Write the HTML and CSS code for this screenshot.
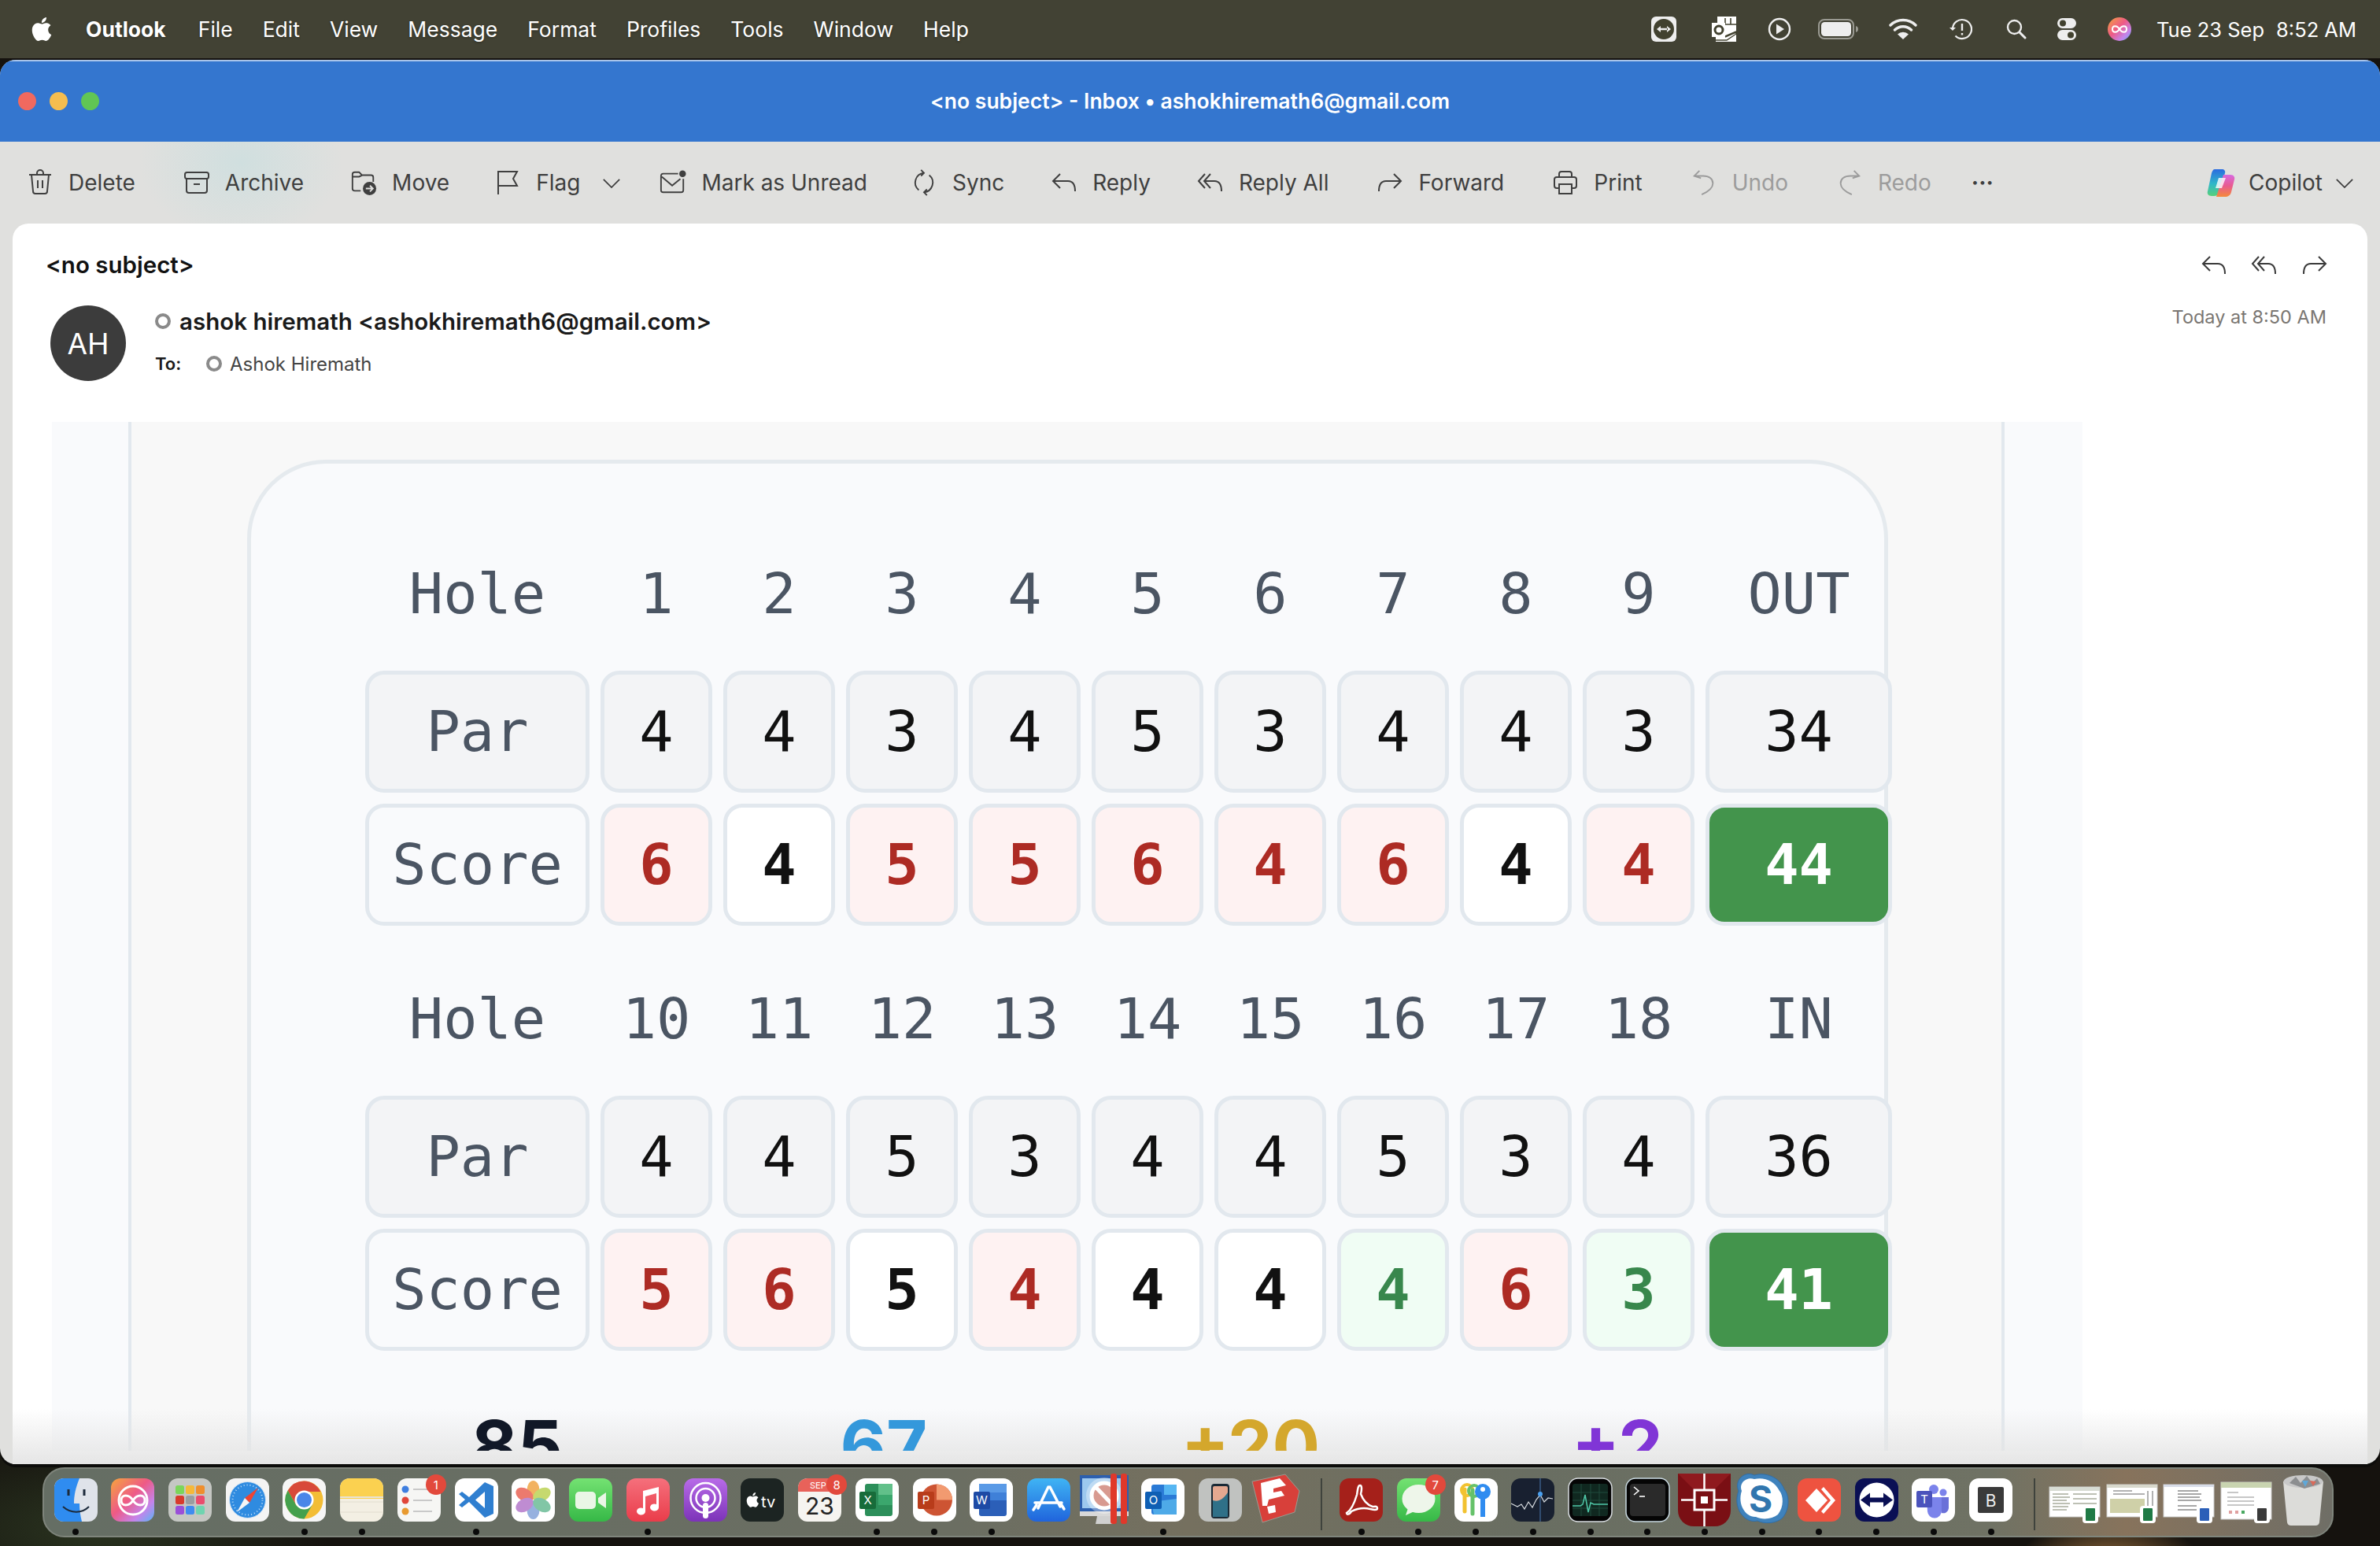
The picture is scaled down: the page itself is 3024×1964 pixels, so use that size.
FILE: index.html
```html
<!DOCTYPE html>
<html lang="en">
<head>
    <meta charset="UTF-8">
    <title>Outlook</title>
    <link rel="stylesheet" href="styles.css">
</head>
<body>
    <svg class="defs" width="0" height="0">
        <defs>
            <linearGradient id="gSiri" x1="0" y1="0" x2="1" y2="1"><stop offset="0" stop-color="#f6a53c"/><stop offset=".45" stop-color="#ee5a86"/><stop offset=".75" stop-color="#c583ea"/><stop offset="1" stop-color="#58b6f5"/></linearGradient>
            <linearGradient id="gCopilotA" x1="0" y1="0" x2="0" y2="1"><stop offset="0" stop-color="#2a6be0"/><stop offset=".55" stop-color="#30b8c8"/><stop offset="1" stop-color="#58d07a"/></linearGradient>
            <linearGradient id="gCopilotB" x1="0" y1="0" x2="0" y2="1"><stop offset="0" stop-color="#d86ae0"/><stop offset=".5" stop-color="#e85a90"/><stop offset="1" stop-color="#f58a3a"/></linearGradient>
            <linearGradient id="gGreen" x1="0" y1="0" x2="0" y2="1"><stop offset="0" stop-color="#74e272"/><stop offset="1" stop-color="#36b847"/></linearGradient>
            <linearGradient id="gMusic" x1="0" y1="0" x2="0" y2="1"><stop offset="0" stop-color="#f5707c"/><stop offset="1" stop-color="#ea3c4a"/></linearGradient>
            <linearGradient id="gPod" x1="0" y1="0" x2="0" y2="1"><stop offset="0" stop-color="#b86be8"/><stop offset="1" stop-color="#7c33b8"/></linearGradient>
            <linearGradient id="gStore" x1="0" y1="0" x2="0" y2="1"><stop offset="0" stop-color="#3fb4f4"/><stop offset="1" stop-color="#2064dc"/></linearGradient>
        </defs>
    </svg>

    <header class="menubar">
        <nav class="menu">
            <svg class="apple" viewBox="0 0 24 24"><path fill="#fff" d="M12.152 6.896c-.948 0-2.415-1.078-3.96-1.04-2.04.027-3.91 1.183-4.961 3.014-2.117 3.675-.546 9.103 1.519 12.09 1.013 1.454 2.208 3.09 3.792 3.039 1.52-.065 2.09-.987 3.935-.987 1.831 0 2.35.987 3.96.948 1.637-.026 2.676-1.48 3.676-2.948 1.156-1.688 1.636-3.325 1.662-3.415-.039-.013-3.182-1.221-3.22-4.857-.026-3.04 2.48-4.494 2.597-4.559-1.429-2.09-3.623-2.324-4.39-2.376-2-.156-3.675 1.09-4.61 1.09zM15.53 3.83c.843-1.012 1.4-2.427 1.245-3.83-1.207.052-2.662.805-3.532 1.818-.78.896-1.454 2.338-1.273 3.714 1.338.104 2.715-.688 3.559-1.701"/></svg>
            <span class="app-name">Outlook</span>
            <span>File</span><span>Edit</span><span>View</span><span>Message</span><span>Format</span><span>Profiles</span><span>Tools</span><span>Window</span><span>Help</span>
        </nav>
        <div class="status">
            <svg width="34" height="34" viewBox="0 0 34 34"><rect x="1" y="1" width="32" height="32" rx="6" fill="#eee"/><circle cx="17" cy="17" r="13" fill="#41412f"/><path d="M8 17l5-4v8zM26 17l-5-4v8zM12 15.8h10v2.4H12z" fill="#eee"/></svg>
            <svg width="34" height="34" viewBox="0 0 34 34"><path d="M8 1h24v32H6v-6H1V9h7z" fill="#fff"/><path d="M18 3v8M25 3v8M9 11h23M32 20l-14 6" stroke="#41412f" stroke-width="1.6" fill="none"/><rect x="1" y="9" width="17" height="18" fill="#fff"/><circle cx="10" cy="18" r="5" fill="none" stroke="#41412f" stroke-width="3"/><path d="M18 27l14-6v2l-12 8H6" fill="none" stroke="#41412f" stroke-width="1.4"/></svg>
            <svg width="30" height="30" viewBox="0 0 30 30"><circle cx="15" cy="15" r="13" fill="none" stroke="#eee" stroke-width="2.4"/><path d="M11 8.500l10 6.500-10 6.500z" fill="#eee"/></svg>
            <svg width="52" height="26" viewBox="0 0 52 26"><rect x="1" y="1" width="44" height="24" rx="7" fill="none" stroke="#9a9a92" stroke-width="2"/><rect x="4" y="4" width="38" height="18" rx="4.5" fill="#eee"/><path d="M48 9c2.600 1 3 2.500 3 4s-.4 3-3 4z" fill="#9a9a92"/></svg>
            <svg width="36" height="28" viewBox="0 0 36 28"><path d="M2 9a23 23 0 0 1 32 0M7.500 15a15 15 0 0 1 21 0" fill="none" stroke="#eee" stroke-width="3.400" stroke-linecap="round"/><path d="M11 20.500a10 10 0 0 1 14 0L18 27z" fill="#eee"/></svg>
            <svg width="30" height="28" viewBox="0 0 30 28"><path d="M5 14a12 12 0 1 1 3.500 8.500" fill="none" stroke="#eee" stroke-width="2.200"/><path d="M1 12l4 4 4-4z" fill="#eee"/><path d="M17 7v9M17 19v2.500" stroke="#eee" stroke-width="2.400"/></svg>
            <svg width="26" height="26" viewBox="0 0 26 26"><circle cx="10.500" cy="10.500" r="8.500" fill="none" stroke="#eee" stroke-width="2.400"/><path d="M17 17l7 7" stroke="#eee" stroke-width="3" stroke-linecap="round"/></svg>
            <svg width="26" height="30" viewBox="0 0 26 30"><rect x="1" y="1" width="24" height="13" rx="6.500" fill="#eee"/><circle cx="8" cy="7.500" r="4" fill="#41412f"/><rect x="1" y="16" width="24" height="13" rx="6.500" fill="#eee"/><circle cx="18" cy="22.500" r="4" fill="#41412f"/></svg>
            <svg width="32" height="32" viewBox="0 0 32 32"><circle cx="16" cy="16" r="15" fill="url(#gSiri)"/><path d="M16 16c-3-5-9-5-9 0s6 5 9 0 9-5 9 0-6 5-9 0z" fill="none" stroke="#fff" stroke-width="2"/></svg>
            <div class="clock"><span>Tue 23 Sep</span><span>8:52 AM</span></div>
        </div>
    </header>

    <main class="window">
        <div class="titlebar">
            <div class="lights"><i class="red"></i><i class="yellow"></i><i class="green"></i></div>
            <div class="title">&lt;no subject&gt; - Inbox • ashokhiremath6@gmail.com</div>
        </div>

        <div class="toolbar">
            <div class="tool"><svg viewBox="0 0 34 34"><path d="M3 7h28M13 7V5a4 4 0 0 1 8 0v2M6 7l2 21a3 3 0 0 0 3 3h12a3 3 0 0 0 3-3l2-21M14 14v10M20 14v10"/></svg>Delete</div>
            <div class="tool"><svg viewBox="0 0 34 34"><rect x="2" y="4" width="30" height="8" rx="2.500"/><path d="M4 12v15a3 3 0 0 0 3 3h20a3 3 0 0 0 3-3V12M13 19h8"/></svg>Archive</div>
            <div class="tool"><svg viewBox="0 0 36 36"><path d="M14 29H6a3 3 0 0 1-3-3V7a3 3 0 0 1 3-3h6l4 4h12a3 3 0 0 1 3 3v6M3 10h9l4-2"/><circle cx="26" cy="26" r="9" fill="#3f3f3f" stroke="none"/><path d="M21 26h9M26.500 22l4 4-4 4" stroke="#e0e0de"/></svg>Move</div>
            <div class="tool tool-flag"><svg viewBox="0 0 34 34"><path d="M5 32V3h24l-5 9 5 9H5"/></svg>Flag<svg class="chev" viewBox="0 0 26 16"><path d="M2 3l11 11L24 3"/></svg></div>
            <div class="tool"><svg viewBox="0 0 36 34"><path d="M25 5H5a3 3 0 0 0-3 3v19a3 3 0 0 0 3 3h24a3 3 0 0 0 3-3V12M3 9l14 12 11-9"/><circle cx="31" cy="5" r="4.500" fill="#3f3f3f" stroke="none"/></svg>Mark as Unread</div>
            <div class="tool"><svg viewBox="0 0 34 36"><path d="M10 28A13 13 0 0 1 17 5M24 8a13 13 0 0 1-7 23M13 1l4 4-4 4M21 27l-4 4 4 4"/></svg>Sync</div>
            <div class="tool"><svg viewBox="0 0 34 28"><path d="M12 3L3 12l9 9M3 12h19c6 0 9 5 9 13"/></svg>Reply</div>
            <div class="tool"><svg viewBox="0 0 34 28"><path d="M10 3l-8 9 8 9M17 3l-8 9 8 9M9 12h13c6 0 9 5 9 13"/></svg>Reply All</div>
            <div class="tool"><svg viewBox="0 0 34 28"><path d="M22 3l9 9-9 9M31 12H12c-6 0-9 5-9 13"/></svg>Forward</div>
            <div class="tool"><svg viewBox="0 0 34 34"><path d="M9 24H6a3 3 0 0 1-3-3v-8a3 3 0 0 1 3-3h22a3 3 0 0 1 3 3v8a3 3 0 0 1-3 3h-3M9 10V6a3 3 0 0 1 3-3h10a3 3 0 0 1 3 3v4M9 19h16v12H9z"/></svg>Print</div>
            <div class="tool off"><svg viewBox="0 0 34 36"><path d="M11 2L4 9l9 3M4 9h12c8 0 13 4 13 10 0 6-6 11-15 15"/></svg>Undo</div>
            <div class="tool off"><svg viewBox="0 0 34 36"><path d="M23 2l7 7-9 3M30 9H18C10 9 5 13 5 19c0 6 6 11 15 15"/></svg>Redo</div>
            <div class="tool tool-more">···</div>
            <div class="tool tool-copilot"><svg class="copilot" viewBox="0 0 38 38"><path d="M11 2h9c3 0 5 2 4 5l-8 25c-1 3-3 4-6 4H7c-4 0-6-3-5-6L7 7c1-3 2-5 4-5z" fill="url(#gCopilotA)"/><path d="M22 9h9c4 0 6 3 5 6l-4 16c-1 4-4 6-8 6H13z" fill="url(#gCopilotB)"/><path d="M16 13h9l-5 13h-8z" fill="#fff" opacity=".8"/></svg>Copilot<svg class="chev" viewBox="0 0 26 16"><path d="M2 3l11 11L24 3"/></svg></div>
        </div>

        <section class="message">
            <div class="msg-head">
                <div class="subject">&lt;no subject&gt;</div>
                <div class="msg-actions">
                    <svg viewBox="0 0 34 28"><path d="M12 3L3 12l9 9M3 12h19c6 0 9 5 9 13"/></svg>
                    <svg viewBox="0 0 34 28"><path d="M10 3l-8 9 8 9M17 3l-8 9 8 9M9 12h13c6 0 9 5 9 13"/></svg>
                    <svg viewBox="0 0 34 28"><path d="M22 3l9 9-9 9M31 12H12c-6 0-9 5-9 13"/></svg>
                </div>
            </div>
            <div class="sender-row">
                <div class="avatar">AH</div>
                <div class="sender-info">
                    <div class="sender"><i class="presence"></i>ashok hiremath &lt;ashokhiremath6@gmail.com&gt;</div>
                    <div class="recipient"><b>To:</b><i class="presence"></i>Ashok Hiremath</div>
                </div>
                <div class="date">Today at 8:50 AM</div>
            </div>

            <div class="shot">
                <div class="shot-inner">
                    <div class="card">
                        <div class="score-grid">
                            <div class="lbl">Hole</div><div class="num">1</div><div class="num">2</div><div class="num">3</div><div class="num">4</div><div class="num">5</div><div class="num">6</div><div class="num">7</div><div class="num">8</div><div class="num">9</div><div class="num">OUT</div>
                            <div class="cell par lbl">Par</div><div class="cell par">4</div><div class="cell par">4</div><div class="cell par">3</div><div class="cell par">4</div><div class="cell par">5</div><div class="cell par">3</div><div class="cell par">4</div><div class="cell par">4</div><div class="cell par">3</div><div class="cell par">34</div>
                            <div class="cell lbl score-lbl">Score</div><div class="cell over">6</div><div class="cell even">4</div><div class="cell over">5</div><div class="cell over">5</div><div class="cell over">6</div><div class="cell over">4</div><div class="cell over">6</div><div class="cell even">4</div><div class="cell over">4</div><div class="cell total">44</div>
                        </div>
                        <div class="score-grid">
                            <div class="lbl">Hole</div><div class="num">10</div><div class="num">11</div><div class="num">12</div><div class="num">13</div><div class="num">14</div><div class="num">15</div><div class="num">16</div><div class="num">17</div><div class="num">18</div><div class="num">IN</div>
                            <div class="cell par lbl">Par</div><div class="cell par">4</div><div class="cell par">4</div><div class="cell par">5</div><div class="cell par">3</div><div class="cell par">4</div><div class="cell par">4</div><div class="cell par">5</div><div class="cell par">3</div><div class="cell par">4</div><div class="cell par">36</div>
                            <div class="cell lbl score-lbl">Score</div><div class="cell over">5</div><div class="cell over">6</div><div class="cell even">5</div><div class="cell over">4</div><div class="cell even">4</div><div class="cell even">4</div><div class="cell under">4</div><div class="cell over">6</div><div class="cell under">3</div><div class="cell total">41</div>
                        </div>
                        <div class="stats">
                            <div class="stat-black">85</div>
                            <div class="stat-blue">67</div>
                            <div class="stat-gold">+20</div>
                            <div class="stat-purple">+2</div>
                        </div>
                    </div>
                </div>
            </div>
            <div class="fade"></div>
        </section>
    </main>

    <footer class="dock">
        <div class="app on"><svg viewBox="0 0 55 55"><rect width="55" height="55" rx="12" fill="#dfe3ea"/><path d="M12 0h20c-5 12-7 22-7 32h7c0 8 1 15 3 23H12A12 12 0 0 1 0 43V12A12 12 0 0 1 12 0z" fill="#2f8cf0"/><path d="M18 14v8M38 14v8" stroke="#1c2a3a" stroke-width="3"/><path d="M11 36c10 9 24 9 33 0" fill="none" stroke="#1c2a3a" stroke-width="2"/></svg></div>
        <div class="app"><svg viewBox="0 0 55 55"><rect width="55" height="55" rx="12" fill="url(#gSiri)"/><circle cx="28" cy="28" r="18" fill="none" stroke="#fff" stroke-width="3"/><path d="M28 28c-5-8-15-8-15 0s10 8 15 0 15-8 15 0-10 8-15 0z" fill="none" stroke="#fff" stroke-width="3"/></svg></div>
        <div class="app"><svg viewBox="0 0 55 55"><rect width="55" height="55" rx="12" fill="#c5c7c3"/><g><rect x="9" y="9" width="11" height="11" rx="2.500" fill="#7bd65a"/><rect x="22" y="9" width="11" height="11" rx="2.500" fill="#f5b93a"/><rect x="35" y="9" width="11" height="11" rx="2.500" fill="#ef8f2e"/><rect x="9" y="22" width="11" height="11" rx="2.500" fill="#d83a2c"/><rect x="22" y="22" width="11" height="11" rx="2.500" fill="#9a9da0"/><rect x="35" y="22" width="11" height="11" rx="2.500" fill="#ea4d6e"/><rect x="9" y="35" width="11" height="11" rx="2.500" fill="#9a4fd8"/><rect x="22" y="35" width="11" height="11" rx="2.500" fill="#3f8cf0"/><rect x="35" y="35" width="11" height="11" rx="2.500" fill="#6fd4b0"/></g></svg></div>
        <div class="app"><svg viewBox="0 0 55 55"><rect width="55" height="55" rx="12" fill="#f4f4f4"/><circle cx="27.500" cy="27.500" r="23" fill="#2f8be0" stroke="#d5e4f2" stroke-width="1"/><circle cx="27.500" cy="27.500" r="19" fill="none" stroke="#bcdcf6" stroke-width="2" stroke-dasharray="1 3"/><path d="M41 12L24 25l6 6z" fill="#ee4433"/><path d="M14 43l16-12-6-6z" fill="#f5f5f5"/></svg></div>
        <div class="app on"><svg viewBox="0 0 55 55"><rect width="55" height="55" rx="12" fill="#f6f6f6"/><circle cx="27.500" cy="27.500" r="24" fill="#f3bd35"/><path d="M27.500 3.500A24 24 0 0 0 6.700 15.500l11 19L27.500 17h20.800A24 24 0 0 0 27.500 3.500z" fill="#d84a3a"/><path d="M6.700 15.500a24 24 0 0 0 20.800 36l11-19-21 2z" fill="#44a04d"/><circle cx="27.500" cy="27.500" r="12" fill="#fff"/><circle cx="27.500" cy="27.500" r="9.500" fill="#4a86e8"/></svg></div>
        <div class="app on"><svg viewBox="0 0 55 55"><rect width="55" height="55" rx="12" fill="#f3efe3"/><path d="M0 12A12 12 0 0 1 12 0h31a12 12 0 0 1 12 12v14H0z" fill="#fbd150"/><rect y="23" width="55" height="2" fill="#e8e3d4"/><path d="M0 30h55M0 43h55" stroke="#e2ddce" stroke-width="1"/></svg></div>
        <div class="app"><svg viewBox="0 0 55 55"><rect width="55" height="55" rx="12" fill="#f6f6f4"/><circle cx="10" cy="14" r="4.500" fill="#3f7fe0"/><circle cx="10" cy="28" r="4.500" fill="#e0463a"/><circle cx="10" cy="42" r="4.500" fill="#e89a30"/><path d="M20 14h24M20 28h24M20 42h24" stroke="#bbb" stroke-width="1.500"/></svg><span class="badge">1</span></div>
        <div class="app on"><svg viewBox="0 0 55 55"><rect width="55" height="55" rx="12" fill="#fff"/><path d="M38 5l11 5v35l-11 5-20-20-9 7-4-3 8-7-8-7 4-3 9 7zM38 17L26 27.500 38 38z" fill="#2f7fd0"/></svg></div>
        <div class="app"><svg viewBox="0 0 55 55"><rect width="55" height="55" rx="12" fill="#fff"/><g opacity=".8"><ellipse cx="27.500" cy="15" rx="8" ry="12" fill="#f0a03a"/><ellipse cx="27.500" cy="40" rx="8" ry="12" fill="#7c9ed8"/><ellipse cx="16.500" cy="21" rx="8" ry="12" fill="#e85a4a" transform="rotate(-60 16.500 21)"/><ellipse cx="38.500" cy="21" rx="8" ry="12" fill="#b8d04a" transform="rotate(60 38.500 21)"/><ellipse cx="16.500" cy="34" rx="8" ry="12" fill="#b070c8" transform="rotate(60 16.500 34)"/><ellipse cx="38.500" cy="34" rx="8" ry="12" fill="#62b890" transform="rotate(-60 38.500 34)"/></g></svg></div>
        <div class="app"><svg viewBox="0 0 55 55"><rect width="55" height="55" rx="12" fill="url(#gGreen)"/><rect x="8" y="17" width="26" height="22" rx="5" fill="#eaf6e6"/><path d="M37 25l10-7v20l-10-7z" fill="#eaf6e6"/></svg></div>
        <div class="app on"><svg viewBox="0 0 55 55"><rect width="55" height="55" rx="12" fill="url(#gMusic)"/><path d="M21 16l20-5v26a5.500 4.500 0 1 1-3-4V19l-14 4v19a5.500 4.500 0 1 1-3-4z" fill="#fff"/></svg></div>
        <div class="app"><svg viewBox="0 0 55 55"><rect width="55" height="55" rx="12" fill="url(#gPod)"/><circle cx="27.500" cy="25" r="19" fill="none" stroke="#fff" stroke-width="2.500"/><circle cx="27.500" cy="25" r="12" fill="none" stroke="#fff" stroke-width="2.500"/><circle cx="27.500" cy="25" r="5" fill="#fff"/><rect x="24" y="31" width="7" height="20" rx="3.500" fill="#fff"/></svg></div>
        <div class="app"><svg viewBox="0 0 55 55"><rect width="55" height="55" rx="12" fill="#1c2422"/><path transform="translate(6 18) scale(.78)" fill="#fff" d="M12.152 6.896c-.948 0-2.415-1.078-3.96-1.04-2.04.027-3.91 1.183-4.961 3.014-2.117 3.675-.546 9.103 1.519 12.09 1.013 1.454 2.208 3.09 3.792 3.039 1.52-.065 2.09-.987 3.935-.987 1.831 0 2.35.987 3.96.948 1.637-.026 2.676-1.48 3.676-2.948 1.156-1.688 1.636-3.325 1.662-3.415-.039-.013-3.182-1.221-3.22-4.857-.026-3.04 2.48-4.494 2.597-4.559-1.429-2.09-3.623-2.324-4.39-2.376-2-.156-3.675 1.09-4.61 1.090zM15.530 3.830c.843-1.012 1.400-2.427 1.245-3.830-1.207.052-2.662.805-3.532 1.818-.78.896-1.454 2.338-1.273 3.714 1.338.104 2.715-.688 3.559-1.701"/><text x="26" y="37" class="svg-t" font-size="20" fill="#fff">tv</text></svg></div>
        <div class="app"><svg viewBox="0 0 55 55"><rect width="55" height="55" rx="12" fill="#f6f4f0"/><path d="M0 17V12A12 12 0 0 1 12 0h31a12 12 0 0 1 12 12v5z" fill="#e8625a"/><text x="15" y="13" class="svg-t" font-size="11" fill="#fff">SEP</text><text x="27.500" y="46" class="svg-t mid" font-size="30" fill="#222">23</text></svg><span class="badge badge-cal">8</span></div>
        <div class="app on"><svg viewBox="0 0 55 55"><rect width="55" height="55" rx="12" fill="#fff"/><rect x="12" y="7" width="35" height="41" rx="3" fill="#2c8f5a"/><rect x="29" y="7" width="18" height="14" fill="#62c08a"/><rect x="29" y="21" width="18" height="13" fill="#3ba76d"/><rect x="5" y="17" width="21" height="22" rx="2" fill="#176c3a"/><text x="15.500" y="33" class="svg-t mid" font-size="15" fill="#fff">X</text></svg></div>
        <div class="app on"><svg viewBox="0 0 55 55"><rect width="55" height="55" rx="12" fill="#fff"/><circle cx="30" cy="27.500" r="20" fill="#cd5433"/><path d="M30 7.500a20 20 0 0 1 20 20H30z" fill="#f29a70"/><rect x="6" y="17" width="21" height="22" rx="2" fill="#b83c1a"/><text x="16.500" y="33" class="svg-t mid" font-size="15" fill="#fff">P</text></svg></div>
        <div class="app on"><svg viewBox="0 0 55 55"><rect width="55" height="55" rx="12" fill="#fff"/><rect x="12" y="7" width="35" height="41" rx="3" fill="#2b5fb8"/><rect x="12" y="7" width="35" height="11" fill="#5a9ae6"/><rect x="12" y="18" width="35" height="10" fill="#3f80d8"/><rect x="5" y="17" width="21" height="22" rx="2" fill="#1d4aa5"/><text x="15.500" y="33" class="svg-t mid" font-size="15" fill="#fff">W</text></svg></div>
        <div class="app"><svg viewBox="0 0 55 55"><rect width="55" height="55" rx="12" fill="url(#gStore)"/><path d="M29 11l13 25M27 11L14 38M10 31h34M8 40l4-6M42 31l5 8" fill="none" stroke="#fff" stroke-width="3.500" stroke-linecap="round"/></svg></div>
        <div class="app big"><svg viewBox="-6 -6 67 67"><rect x="-6" y="-4" width="62" height="46" fill="#2c5fae"/><rect x="-3" y="0" width="56" height="38" fill="#9cc8ee"/><rect x="-6" y="42" width="62" height="6" fill="#d8d8d8"/><path d="M16 48h18l2 10H14z" fill="#d0d0d0"/><circle cx="25" cy="22" r="23" fill="#fff" opacity=".35"/><circle cx="25" cy="22" r="16" fill="#d89a90" stroke="#fff" stroke-width="5"/><path d="M14 11l22 23" stroke="#fff" stroke-width="5"/><rect x="33" y="-6" width="8" height="64" rx="3" fill="#e0382a"/><rect x="46" y="-6" width="8" height="64" rx="3" fill="#e0382a"/></svg></div>
        <div class="app on"><svg viewBox="0 0 55 55"><rect width="55" height="55" rx="12" fill="#fff"/><rect x="13" y="8" width="32" height="38" rx="3" fill="#2a7ad6"/><rect x="29" y="8" width="16" height="13" fill="#56b6f2"/><path d="M13 30l32-4v20H16z" fill="#4eaae8"/><rect x="5" y="17" width="21" height="22" rx="2" fill="#0f5fb4"/><text x="15.500" y="33" class="svg-t mid" font-size="15" fill="#fff">O</text></svg></div>
        <div class="app"><svg viewBox="0 0 55 55"><rect width="55" height="55" rx="12" fill="#c0c2c0"/><rect x="16" y="7" width="23" height="44" rx="4" fill="#1a2a36"/><rect x="18" y="10" width="19" height="39" rx="2" fill="#e4a890"/><path d="M18 49V28c7 2 12 0 19-10v31z" fill="#2f7088"/></svg></div>
        <div class="app big"><svg viewBox="-6 -6 67 67"><path d="M-5 4L37-5l18 21-6 27L8 56z" fill="#d8403a" stroke="#9a9a90" stroke-width="1"/><path d="M6 6l24-6 8 9-16 4 0 5 10-2 4 6-20 5-2 8-6 0zM14 36l10-2 1 9-9 2z" fill="#fff"/></svg></div>
        <div class="dock-sep"></div>
        <div class="app on"><svg viewBox="0 0 55 55"><rect width="55" height="55" rx="12" fill="#a5201a"/><path d="M9 44c5-3 10-13 13-23 1-5 1-12 4-12 3 0 2 7 1 11 3 8 9 14 15 16 3 0 6-1 6 2 0 3-5 2-9 1-8-2-16-1-24 3-3 5-6 4-6 2z" fill="none" stroke="#fff" stroke-width="2.500"/></svg></div>
        <div class="app on"><svg viewBox="0 0 55 55"><rect width="55" height="55" rx="12" fill="url(#gGreen)"/><ellipse cx="27.500" cy="26" rx="21" ry="18" fill="#eef6ea"/><path d="M14 38l-3 9 11-5z" fill="#eef6ea"/></svg><span class="badge">7</span></div>
        <div class="app on"><svg viewBox="0 0 55 55"><rect width="55" height="55" rx="12" fill="#fff"/><path d="M13 14v28" stroke="#f2c230" stroke-width="5" fill="none" stroke-linecap="round"/><circle cx="16" cy="15" r="7" fill="none" stroke="#f2c230" stroke-width="4"/><path d="M23 15v30" stroke="#66c26a" stroke-width="5" stroke-linecap="round"/><circle cx="25" cy="16" r="7" fill="none" stroke="#66c26a" stroke-width="4"/><circle cx="36" cy="17" r="10" fill="#2f8cf0"/><circle cx="36" cy="14" r="3" fill="#fff"/><path d="M36 25v24" stroke="#2f8cf0" stroke-width="6"/></svg></div>
        <div class="app on"><svg viewBox="0 0 55 55"><rect width="55" height="55" rx="12" fill="#182030"/><path d="M37 0v55" stroke="#4a78b0" stroke-width="1"/><path d="M0 32l8 4 5-3 4 6 5-9 5 7 5-10 5-6 5 9 5-5 6 1" fill="none" stroke="#d8dce0" stroke-width="1.200"/><circle cx="37" cy="20" r="3" fill="#4aa0f0"/></svg></div>
        <div class="app on"><svg viewBox="0 0 55 55"><rect width="55" height="55" rx="12" fill="#050505" stroke="#d8dce0" stroke-width="1.500"/><rect x="5" y="7" width="45" height="41" rx="3" fill="#102820"/><path d="M5 18h45M5 28h45M5 38h45M16 7v41M28 7v41M39 7v41" stroke="#1f4a3c" stroke-width="1"/><path d="M5 35h10l3-2 3-12 4 22 3-12 4 2h18" fill="none" stroke="#4fc8a8" stroke-width="1.500"/></svg></div>
        <div class="app on"><svg viewBox="0 0 55 55"><rect width="55" height="55" rx="12" fill="#050505" stroke="#c8d8e0" stroke-width="1.500"/><rect x="5" y="7" width="45" height="41" rx="4" fill="#2a2a2a"/><path d="M10 11l6 5-6 5" fill="none" stroke="#fff" stroke-width="1.600"/><path d="M17 23h7" stroke="#fff" stroke-width="1.600"/></svg></div>
        <div class="app big on"><svg viewBox="-6 -6 67 67"><path d="M-6-6h67v47a20 20 0 0 1-20 20H14A20 20 0 0 1-6 41z" fill="#7a0f14"/><path d="M-6-6l33 33L61-6z" fill="#8f1a1e"/><path d="M27.500-6v67M-2 27.500h59" stroke="#fff" stroke-width="2.500"/><rect x="15" y="15" width="25" height="25" fill="#7a0f14" stroke="#fff" stroke-width="3"/><rect x="23" y="23" width="9" height="9" fill="#fff"/></svg></div>
        <div class="app big on"><svg viewBox="-6 -6 67 67"><path d="M-2 16c-6-14 8-26 20-20 14-4 32 2 38 18 6 6 8 24-2 36-8 8-24 8-32 4C6 58-10 38-2 16z" fill="#3f82bc" stroke="#2f6ea8" stroke-width="1"/><path d="M2 16c-4-10 6-18 16-15 12-3 26 2 32 15 5 6 6 20-2 30-7 6-20 7-28 3C8 50-4 34 2 16z" fill="#fff"/><text x="26" y="43" class="svg-t mid" font-size="46" font-weight="700" fill="#3176ae">S</text></svg></div>
        <div class="app on"><svg viewBox="0 0 55 55"><rect width="55" height="55" rx="12" fill="#ee5340"/><path d="M24 13l14 15-14 15-14-15z" fill="#fff"/><path d="M33 11l15 17-15 17-3-3 12-14-12-14z" fill="#fff"/></svg></div>
        <div class="app on"><svg viewBox="0 0 55 55"><rect width="55" height="55" rx="12" fill="#0a0f54"/><circle cx="27.500" cy="27.500" r="22" fill="#fff"/><path d="M7 27.500l12-9v6h17v-6l12 9-12 9v-6H19v6z" fill="#0a0f54"/></svg></div>
        <div class="app on"><svg viewBox="0 0 55 55"><rect width="55" height="55" rx="12" fill="#fff"/><circle cx="28" cy="14" r="6" fill="#7b83eb"/><circle cx="40" cy="18" r="4.500" fill="#7b83eb"/><path d="M34 24h13v14a7 7 0 0 1-9 6z" fill="#6a70d8"/><path d="M19 24h19v17a9 9 0 0 1-18 1z" fill="#7b83eb"/><rect x="6" y="16" width="20" height="21" rx="2" fill="#4b53bc"/><text x="16" y="32" class="svg-t mid" font-size="15" fill="#fff">T</text></svg></div>
        <div class="app on"><svg viewBox="0 0 55 55"><rect width="55" height="55" rx="12" fill="#fff"/><rect x="11" y="11" width="33" height="33" rx="2" fill="#3a3a3a"/><text x="27.500" y="36" class="svg-t mid" font-size="21" fill="#eee">B</text></svg></div>
        <div class="dock-sep"></div>
        <div class="app thumb"><svg viewBox="-4 0 64 50"><rect x="-4" y="3" width="64" height="38" fill="#fff" stroke="#ccc"/><rect x="-4" y="3" width="64" height="5" fill="#d8dcd4"/><path d="M0 12h20M0 16h22M0 20h18M0 24h22M0 28h20M0 32h18M26 12h30M26 18h30M26 24h30" stroke="#a8ac9c" stroke-width="1.500"/><rect x="38" y="27" width="20" height="22" rx="4" fill="#fff"/><rect x="42" y="30" width="12" height="16" rx="1" fill="#1f7a45"/></svg></div>
        <div class="app thumb"><svg viewBox="-4 0 64 50"><rect x="-4" y="0" width="64" height="41" fill="#fff" stroke="#ccc"/><rect x="-4" y="0" width="64" height="4" fill="#d8d8cc"/><rect x="0" y="18" width="44" height="18" fill="#cfd0a8"/><path d="M4 8h24M4 12h40M48 8v28M54 8v28" stroke="#999" stroke-width="1.500"/><rect x="38" y="27" width="20" height="22" rx="4" fill="#fff"/><rect x="42" y="30" width="12" height="16" rx="1" fill="#1f7a45"/></svg></div>
        <div class="app thumb"><svg viewBox="-4 0 64 50"><rect x="-4" y="0" width="64" height="41" fill="#fff" stroke="#ccc"/><path d="M14 8h26M14 12h30M14 16h28M14 20h30M14 27h24M14 32h28" stroke="#8a8a8a" stroke-width="1.500"/><rect x="-4" y="0" width="64" height="3" fill="#d8dce8"/><rect x="38" y="27" width="20" height="22" rx="4" fill="#fff"/><rect x="42" y="30" width="12" height="16" rx="1" fill="#2b5fb8"/></svg></div>
        <div class="app thumb"><svg viewBox="-4 0 64 50"><rect x="-4" y="-3" width="64" height="47" fill="#fff" stroke="#ccc"/><rect x="-4" y="-3" width="64" height="7" fill="#c9d4b0"/><path d="M4 10h14M4 16h34M4 21h34M4 26h34" stroke="#b5b5b5" stroke-width="1.500"/><rect x="6" y="33" width="4" height="4" fill="#e0a0a0"/><rect x="14" y="33" width="4" height="4" fill="#e0a0a0"/><rect x="22" y="33" width="4" height="4" fill="#48a860"/><rect x="38" y="27" width="20" height="22" rx="4" fill="#fff"/><rect x="42" y="30" width="12" height="16" rx="1" fill="#3a3a3a"/></svg></div>
        <div class="app big"><svg viewBox="-6 -6 67 67"><path d="M2 4h51l-5 52a5 5 0 0 1-5 4H12a5 5 0 0 1-5-4z" fill="#e8e8e6" opacity=".9"/><ellipse cx="27.500" cy="4" rx="25" ry="8" fill="#c8c8c8"/><path d="M10 6l8-8 6 8 8-9 7 9 6-6 4 7-20 6z" fill="#8c8e90"/><path d="M26 3l4 8 4-8z" fill="#5fa8d8"/><path d="M36 3l4 7 4-6z" fill="#d86a5a"/></svg></div>
    </footer>
</body>
</html>
```

FILE: styles.css
```css
* {
    box-sizing: border-box;
}
html, body {
    margin: 0;
    padding: 0;
}
body {
    width: 3024px;
    height: 1964px;
    overflow: hidden;
    font-family: Inter, "Liberation Sans", sans-serif;
    background:
        radial-gradient(ellipse 120px 60px at 2680px 1990px, #9a7040, transparent),
        radial-gradient(ellipse 300px 120px at 120px 1940px, #2a3420, transparent),
        #15120e;
}
.defs {
    position: absolute;
}

/* menu bar */
.menubar {
    height: 74px;
    background: #424234;
    display: flex;
    align-items: center;
    justify-content: space-between;
    color: #fff;
    font-size: 26.500px;
    padding: 0 30px 0 38px;
}
.menu {
    display: flex;
    align-items: center;
    gap: 38px;
    text-shadow: 0 1px 3px rgba(0, 0, 0, .35);
}
.apple {
    width: 30px;
    height: 34px;
    margin-right: 3px;
}
.app-name {
    font-weight: 700;
    margin-right: 3px;
}
.status {
    display: flex;
    align-items: center;
    gap: 38px;
    font-size: 25.500px;
}
.status svg:nth-child(1) { margin-right: 5px; }
.status svg:nth-child(3) { margin-right: -4px; }
.status svg:nth-child(5) { margin-right: 2px; }
.status svg:nth-child(6) { margin-right: 5px; }
.clock {
    display: flex;
    gap: 15px;
    margin-left: -7px;
}

/* window */
.window {
    margin-top: 2px;
    height: 1784px;
    display: flex;
    flex-direction: column;
    border-radius: 20px 20px 20px 20px;
    overflow: hidden;
    background: #e0e0de;
    box-shadow: 0 4px 0 #0c0c0a;
}
.titlebar {
    height: 104px;
    background: #3476cf;
    border-top: 2px solid #a9c4ea;
    display: flex;
    align-items: center;
    justify-content: center;
    position: relative;
}
.lights {
    position: absolute;
    left: 23px;
    top: 39px;
    display: flex;
    gap: 17px;
}
.lights i {
    width: 23px;
    height: 23px;
    border-radius: 50%;
}
.lights .red { background: #f0695f; }
.lights .yellow { background: #f5bd4f; }
.lights .green { background: #61c554; }
.title {
    color: #fff;
    font-size: 26.500px;
    font-weight: 600;
    padding-bottom: 2px;
}

/* toolbar */
.toolbar {
    height: 104px;
    display: flex;
    align-items: center;
    gap: 58px;
    padding: 0 33px 0 34px;
    flex-shrink: 0;
    background: radial-gradient(ellipse 130px 100px at 306px 26px, #d0dfdf, transparent) #e0e0de;
}
.tool {
    display: flex;
    align-items: center;
    gap: 19px;
    font-size: 28px;
    color: #3f3f3f;
}
.tool:nth-child(2) { margin-left: 3px; }
.tool:nth-child(3) { margin-left: 1px; }
.tool:nth-child(4) { margin-left: -1px; }
.tool:nth-child(5) { margin-left: -9px; }
.tool:nth-child(6) { margin-left: -3px; }
.tool:nth-child(7) { margin-left: 1px; }
.tool:nth-child(8) { margin-left: 1px; }
.tool:nth-child(9) { margin-left: 3px; }
.tool:nth-child(10) { margin-left: 3px; }
.tool:nth-child(11) { margin-left: 3px; }
.tool:nth-child(12) { margin-left: 3px; }
.tool svg {
    width: 34px;
    height: 34px;
    fill: none;
    stroke: #3f3f3f;
    stroke-width: 2;
    flex-shrink: 0;
}
.tool.off {
    color: #9c9c9c;
}
.tool.off svg {
    stroke: #9c9c9c;
}
.tool .chev {
    width: 24px;
    height: 15px;
    margin-left: 9px;
}
.tool-more {
    font-weight: 700;
    margin-left: -7px;
}
.tool-copilot {
    margin-left: auto;
    gap: 16px;
}
.tool-copilot .chev {
    margin-left: 0;
}
.tool .copilot {
    width: 38px;
    height: 38px;
    stroke: none;
}

/* message */
.message {
    flex: 1;
    min-height: 0;
    margin: 0 16px;
    background: #fff;
    border-radius: 20px 20px 0 0;
    position: relative;
    display: flex;
    flex-direction: column;
    padding-bottom: 17px;
}
.msg-head {
    display: flex;
    justify-content: space-between;
    align-items: center;
    height: 72px;
    padding: 34px 50px 0 42px;
}
.subject {
    font-size: 29.500px;
    font-weight: 600;
    color: #111;
    margin-top: -2px;
}
.msg-actions {
    display: flex;
    gap: 30px;
}
.msg-actions svg {
    width: 34px;
    height: 28px;
    fill: none;
    stroke: #3a3a3a;
    stroke-width: 2;
}
.sender-row {
    display: flex;
    height: 180px;
    padding: 32px 52px 0 48px;
}
.avatar {
    width: 96px;
    height: 96px;
    border-radius: 50%;
    background: #3c3c3c;
    color: #fff;
    font-size: 37px;
    display: flex;
    align-items: center;
    justify-content: center;
    flex-shrink: 0;
}
.sender-info {
    margin: -2px 0 0 37px;
    flex: 1;
}
.sender {
    display: flex;
    align-items: center;
    gap: 11px;
    font-size: 29.500px;
    font-weight: 600;
    color: #1a1a1a;
    height: 44px;
}
.presence {
    width: 20px;
    height: 20px;
    border: 4px solid #8a8a8a;
    border-radius: 50%;
}
.recipient {
    display: flex;
    align-items: center;
    font-size: 24px;
    color: #444;
    height: 32px;
    margin-top: 16px;
}
.recipient b {
    color: #1a1a1a;
    font-size: 22px;
    font-weight: 600;
    width: 65px;
}
.recipient .presence {
    margin-right: 10px;
}
.date {
    font-size: 23.500px;
    color: #7a7672;
}

/* picture in the mail */
.shot {
    flex: 1;
    min-height: 0;
    margin-left: 50px;
    width: 2580px;
    overflow: hidden;
    background: #f9fafc;
    padding: 0 99px 0 97px;
}
.shot-inner {
    height: 100%;
    background: #f8f8f8;
    border: solid #e2e8ee;
    border-width: 0 4px;
    padding: 48px 0 0 147px;
}
.card {
    width: 2085px;
    height: 1400px;
    background: #f9fafc;
    border: 5px solid #e5eaee;
    border-radius: 100px 100px 0 0;
    padding: 81px 0 0 145px;
}
.score-grid {
    display: grid;
    width: 1941px;
    grid-template-columns: 285px repeat(9, 142px) 237px;
    grid-template-rows: 168px 155px 155px;
    gap: 14px;
    margin-bottom: 34px;
    font-family: "DejaVu Sans Mono", "Liberation Mono", monospace;
    font-size: 72px;
    color: #111;
}
.score-grid > div {
    display: flex;
    align-items: center;
    justify-content: center;
}
.num, .lbl {
    color: #4b5563;
}
.cell {
    border: 5px solid #e2e8ee;
    border-radius: 24px;
    padding-bottom: 2px;
}
.par {
    background: #f3f4f6;
}
.score-grid .lbl.par {
    color: #4b5563;
}
.score-lbl {
    background: #f9fafc;
}
.over {
    background: #fef2f2;
    color: #ad2b24;
    font-weight: 700;
}
.even {
    background: #fff;
    font-weight: 700;
}
.under {
    background: #f0fdf4;
    color: #38874c;
    font-weight: 700;
}
.total {
    background: #43944c;
    color: #fff;
    font-weight: 700;
}
.stats {
    display: grid;
    grid-template-columns: repeat(4, 466px);
    margin: 76px 0 0 -40px;
    font-size: 90px;
    font-weight: 700;
    line-height: 1;
    text-align: center;
    position: relative;
    z-index: 2;
}
.stat-black { color: #111827; }
.stat-blue { color: #3498db; }
.stat-gold { color: #d4a72c; }
.stat-purple { color: #8035d6; }
.fade {
    position: absolute;
    left: 0;
    right: 0;
    bottom: 0;
    height: 70px;
    background: linear-gradient(rgba(228, 228, 228, 0), rgba(228, 228, 228, .95));
}

/* dock */
.dock {
    width: 2911px;
    height: 89px;
    margin: 4px 0 0 54px;
    padding: 12px 0 0 12.5px;
    display: flex;
    align-items: flex-start;
    gap: 17.74px;
    background: linear-gradient(90deg, #656e64, #6b6e62 40%, #75705f 50%, #696e62 65%, #6f7264 85%, #87735c 91%, #6f6e66);
    border: 2px solid #7f857c;
    border-radius: 28px;
}
.app {
    width: 55px;
    height: 55px;
    position: relative;
    flex-shrink: 0;
}
.app svg {
    width: 55px;
    height: 55px;
    display: block;
    overflow: visible;
}
.app.big svg {
    width: 67px;
    height: 67px;
    margin: -6px;
}
.app.thumb svg {
    width: 64px;
    height: 50px;
    margin: 8px -4.500px 0;
}
.app.on::after {
    content: "";
    position: absolute;
    left: 23.500px;
    top: 64px;
    width: 8px;
    height: 8px;
    border-radius: 50%;
    background: #0a0a0a;
}
.badge {
    position: absolute;
    top: -5px;
    right: -7px;
    width: 26px;
    height: 26px;
    border-radius: 50%;
    background: #e2493c;
    color: #fff;
    font-size: 15px;
    display: flex;
    align-items: center;
    justify-content: center;
}
.svg-t {
    font-family: Inter, "Liberation Sans", sans-serif;
}
.svg-t.mid {
    text-anchor: middle;
}
.dock-sep {
    width: 2px;
    height: 66px;
    margin: 0 4.700px 0 9px;
    background: #3f433d;
    flex-shrink: 0;
}
```
